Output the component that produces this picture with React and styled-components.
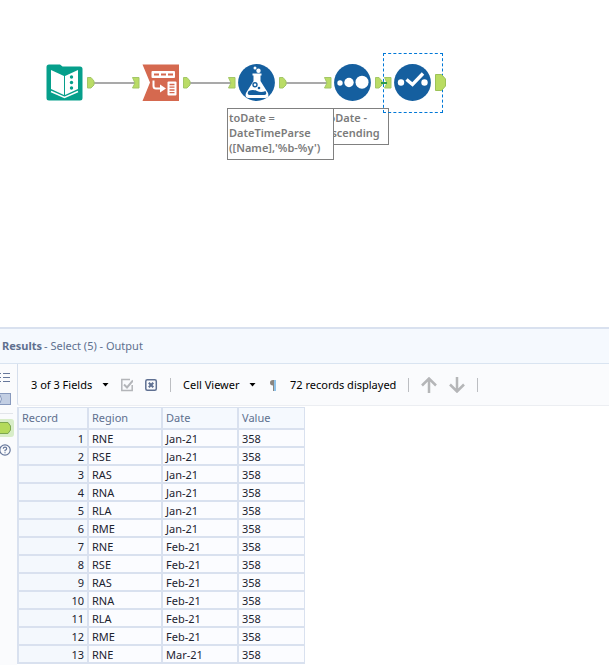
import styled, { createGlobalStyle } from "styled-components";

const REGIONS = ["RNE", "RSE", "RAS", "RNA", "RLA", "RME"];
const MONTHS = ["Jan-21", "Feb-21", "Mar-21"];

const records = Array.from({ length: 13 }, (_, i) => ({
    id: i + 1,
    region: REGIONS[i % 6],
    date: MONTHS[Math.floor(i / 6)],
    value: 358
}));

export default function App() {
    return (
        <>
            <GlobalStyle />
            <Page>
                <Workflow />
                <Results />
            </Page>
        </>
    );
}

function Workflow() {
    return (
        <Canvas aria-label="Workflow">
            <Wires width="460" height="120" aria-hidden="true">
                <path d="M93 83H136M189 83H231M285 83H327" stroke="#a9a9a9" strokeWidth="2" />
            </Wires>
            <Annotation $x={322} $w={67}>toDate -<br />Ascending</Annotation>
            <Annotation $x={227} $w={107}>toDate =<br />DateTimeParse<br />([Name],'%b-%y')</Annotation>
            <Selection />
            <Tool $x={46}><InputIcon /></Tool>
            <Tool $x={142}><TransposeIcon /></Tool>
            <Tool $x={238}><FormulaIcon /></Tool>
            <Tool $x={334}><SortIcon /></Tool>
            <Tool $x={394}><SelectIcon /></Tool>
            {[87, 183, 279, 375].map(x => <OutAnchor key={x} x={x} />)}
            {[132, 228, 324, 384].map(x => <InAnchor key={x} x={x} />)}
            <Wires width="460" height="120" aria-hidden="true">
                <path d="M381 83H387" stroke="#2f9a4b" strokeWidth="2" />
                <path d="M435.5 74.500H441.500L445.500 79V86L441.500 90.500H435.500Z" fill="#b9dc62" stroke="#9cc258" />
            </Wires>
        </Canvas>
    );
}

function OutAnchor({ x }) {
    return (
        <Anchor $x={x} width="8" height="12" aria-hidden="true">
            <path d="M.5 .5H4L7 4V8L4 11H.5Z" fill="#badc66" stroke="#a3c767" />
        </Anchor>
    );
}

function InAnchor({ x }) {
    return (
        <Anchor $x={x} width="8" height="12" aria-hidden="true">
            <path d="M.5 .5H7V11H.5L3 6Z" fill="#badc66" stroke="#a3c767" />
        </Anchor>
    );
}

function InputIcon() {
    return (
        <svg width="37" height="37" viewBox="0 0 37 37">
            <path d="M3 .5H14L16.500 2.500H34Q36.500 2.500 36.500 5V34Q36.500 36.500 34 36.500H3Q.5 36.500 .5 34V3Q.5 .5 3 .5Z" fill="#069f8b" />
            <path d="M5 6L18 12V31L5 25Z" fill="#fff" />
            <path d="M19 12L32 6V25L19 31Z" fill="#fff" />
            <path d="M5 27.500L18.500 33.500L32 27.500" fill="none" stroke="#fff" strokeWidth="1.500" />
            <g fill="#069f8b">
                <circle cx="25.500" cy="13" r="1.700" />
                <circle cx="25.500" cy="18.500" r="1.700" />
                <circle cx="25.500" cy="24" r="1.700" />
            </g>
        </svg>
    );
}

function TransposeIcon() {
    return (
        <svg width="37" height="37" viewBox="0 0 37 37">
            <path d="M.5 .5H37V37H.5L8 18.500Z" fill="#d5694f" />
            <rect x="9.500" y="7" width="23.500" height="7" rx="1" fill="#fff" />
            <path d="M12 10.500H17M19 10.500H24M26 10.500H31" stroke="#d5694f" strokeWidth="2" />
            <rect x="25.500" y="17.500" width="9" height="14" rx="1" fill="#fff" />
            <path d="M27.500 20.500H32.500M27.500 23.200H32.500M27.500 26H32.500M27.500 28.700H32.500" stroke="#d5694f" strokeWidth="1.300" />
            <path d="M11.500 16.500V22Q11.500 24.500 14 24.500H19" fill="none" stroke="#fff" strokeWidth="2" />
            <path d="M18 20.500L24 24.500L18 28.500Z" fill="#fff" />
        </svg>
    );
}

function FormulaIcon() {
    return (
        <svg width="37" height="37" viewBox="0 0 37 37">
            <circle cx="18.500" cy="18.500" r="18.400" fill="#155f9f" />
            <circle cx="17" cy="4" r="1.500" fill="#fff" />
            <circle cx="20.500" cy="6.800" r="2.200" fill="#fff" />
            <path d="M14.500 9.500H23.500V11.500H22.500V17L30 29Q31.500 33.500 27.500 34H10.500Q6.500 33.500 8 29L15.500 17V11.500H14.500Z" fill="#fff" />
            <path d="M10.500 27Q15 25 19 27T27.500 27Q29.500 31 26.500 31H11.500Q8.500 31 10.500 27Z" fill="#155f9f" />
            <circle cx="17" cy="20.800" r="2" fill="none" stroke="#155f9f" strokeWidth="1.400" />
            <circle cx="21" cy="24" r="1.300" fill="#155f9f" />
        </svg>
    );
}

function SortIcon() {
    return (
        <svg width="37" height="37" viewBox="0 0 37 37">
            <circle cx="18.500" cy="18.500" r="18.400" fill="#155f9f" />
            <g fill="#fff">
                <circle cx="6" cy="19" r="2.700" />
                <circle cx="15" cy="18.500" r="4.700" />
                <circle cx="28" cy="18.200" r="6.500" />
            </g>
        </svg>
    );
}

function SelectIcon() {
    return (
        <svg width="37" height="37" viewBox="0 0 37 37">
            <circle cx="18.500" cy="18.500" r="18.400" fill="#155f9f" />
            <circle cx="7" cy="18.500" r="3.200" fill="#fff" />
            <circle cx="30.500" cy="18.500" r="3.200" fill="#fff" />
            <path d="M12.500 15.500L18.500 20.500L29 9.500" fill="none" stroke="#fff" strokeWidth="3.400" />
        </svg>
    );
}

function Results() {
    return (
        <Panel>
            <PanelHeader>
                <strong>Results</strong>
                <span>- Select (5) - Output</span>
            </PanelHeader>
            <PanelBody>
                <Rail>
                    <RailButton aria-label="Messages">
                        <svg width="14" height="18">
                            <path d="M3 5.500H10M3 9.500H10M3 13.500H10M0 5.500H1M0 9.500H1M0 13.500H1" stroke="#66779b" />
                        </svg>
                    </RailButton>
                    <RailButton aria-label="Input data">
                        <svg width="14" height="18">
                            <rect x="-2" y="3.500" width="12.500" height="11" fill="#c2cee3" stroke="#8799bd" />
                            <path d="M0 5Q3 9 0 13" fill="#e3e9f4" stroke="#8799bd" />
                        </svg>
                    </RailButton>
                    <RailLine />
                    <RailButton aria-label="Output data" $active>
                        <svg width="14" height="18">
                            <path d="M-2 3.500H8L10.500 7V11L8 14.500H-2Z" fill="#b4da5b" stroke="#7da750" />
                        </svg>
                    </RailButton>
                    <RailButton aria-label="Help">
                        <svg width="14" height="18" fill="none" stroke="#66779b">
                            <circle cx="5" cy="9" r="5.200" strokeWidth="1.200" />
                            <path d="M3.300 7.700Q3.300 6.200 5 6.200T6.700 7.700Q6.700 8.600 5 9.400V10.200M5 11.200V12.200" strokeWidth="1.200" />
                        </svg>
                    </RailButton>
                </Rail>
                <Content>
                    <Toolbar />
                    <ResultsTable />
                </Content>
            </PanelBody>
        </Panel>
    );
}

function Dropdown({ label, value }) {
    return (
        <DropdownLabel>
            <DropdownSelect aria-label={label} defaultValue={value}>
                <option>{value}</option>
            </DropdownSelect>
            <svg width="7" height="4" aria-hidden="true"><path d="M.5 0H6.500L3.500 3.500Z" fill="#000" /></svg>
        </DropdownLabel>
    );
}

function Toolbar() {
    return (
        <Bar>
            <Dropdown label="Fields" value="3 of 3 Fields" />
            <IconButton aria-label="Select all">
                <svg width="12" height="14" fill="none" stroke="#b3b5b9">
                    <path d="M9 1.500H.8V12.500H11.200V7" strokeWidth="1.500" />
                    <path d="M3 6.500L6 9.500L12 2.500" strokeWidth="2" />
                </svg>
            </IconButton>
            <IconButton aria-label="Deselect all">
                <svg width="13" height="14" fill="none" stroke="#5f7092">
                    <rect x=".8" y="1.800" width="10.500" height="10.500" rx="1.500" strokeWidth="1.500" />
                    <path d="M3.800 4.800L8.300 9.300M8.300 4.800L3.800 9.300" strokeWidth="2" />
                </svg>
            </IconButton>
            <Divider />
            <Dropdown label="Viewer" value="Cell Viewer" />
            <IconButton aria-label="Show whitespace">
                <svg width="10" height="12">
                    <path d="M6 1H5Q2 1 2 3.800T5 6.500H6Z" fill="#8a8580" />
                    <path d="M5.500 1V12" stroke="#8a8580" />
                    <path d="M7 1V12" stroke="#8fc3ea" strokeWidth="2" />
                </svg>
            </IconButton>
            <output>72 records displayed</output>
            <Divider />
            <IconButton aria-label="Previous">
                <svg width="16" height="16" fill="none" stroke="#b5b6b8" strokeWidth="2.500">
                    <path d="M8 16V2M1 8.500L8 1.500L15 8.500" />
                </svg>
            </IconButton>
            <IconButton aria-label="Next">
                <svg width="16" height="16" fill="none" stroke="#b5b6b8" strokeWidth="2.500">
                    <path d="M8 0V14M1 7.500L8 14.500L15 7.500" />
                </svg>
            </IconButton>
            <Divider />
        </Bar>
    );
}

function ResultsTable() {
    return (
        <Table>
            <colgroup>
                <Col $w={70} />
                <Col $w={74} />
                <Col $w={76} />
                <Col $w={68} />
            </colgroup>
            <thead>
                <tr>
                    <HeadCell>Record</HeadCell>
                    <HeadCell>Region</HeadCell>
                    <HeadCell>Date</HeadCell>
                    <HeadCell>Value</HeadCell>
                </tr>
            </thead>
            <tbody>
                {records.map(({ id, region, date, value }) => (
                    <tr key={id}>
                        <RecordCell>{id}</RecordCell>
                        <Cell>{region}</Cell>
                        <Cell>{date}</Cell>
                        <Cell>{value}</Cell>
                    </tr>
                ))}
            </tbody>
        </Table>
    );
}

const GlobalStyle = createGlobalStyle`
    * {
        box-sizing: border-box;
    }
    body {
        margin: 0;
        background: #fff;
        font-family: "Noto Sans", "Open Sans", sans-serif;
        font-size: 11px;
        line-height: 16px;
        color: #000;
    }
    button, select {
        font: inherit;
        color: inherit;
        border: none;
        background: none;
        padding: 0;
        margin: 0;
    }
    svg {
        display: block;
    }
`

const Page = styled.main`
    height: 100vh;
    display: flex;
    flex-direction: column;
    overflow: hidden;
`

const Canvas = styled.section`
    position: relative;
    flex: 0 0 auto;
    min-height: 327px;
    overflow: hidden;
`

const Wires = styled.svg`
    position: absolute;
    left: 0;
    top: 0;
`

const Tool = styled.div`
    position: absolute;
    left: ${props => props.$x}px;
    top: 64px;
`

const Anchor = styled.svg`
    position: absolute;
    left: ${props => props.$x}px;
    top: 77px;
`

const Annotation = styled.div`
    position: absolute;
    left: ${props => props.$x}px;
    top: 108px;
    width: ${props => props.$w}px;
    padding: 1px 1px 4px;
    border: 1px solid #808080;
    background: #fff;
    color: #7b7b7b;
    font-weight: 600;
    line-height: 15px;
    white-space: nowrap;
`

const Selection = styled.div`
    position: absolute;
    left: 383px;
    top: 53px;
    width: 60px;
    height: 60px;
    border: 1px dashed #0078d7;
`

const Panel = styled.section`
    flex: 1;
    display: flex;
    flex-direction: column;
    border-top: 2px solid #d9e1ef;
`

const PanelHeader = styled.header`
    display: flex;
    align-items: center;
    gap: 2px;
    height: 35px;
    padding: 0 2px;
    border-bottom: 1px solid #d9e4f1;
    background: #f5f9fe;
    color: #60708f;
`

const PanelBody = styled.div`
    flex: 1;
    display: flex;
`

const Rail = styled.nav`
    width: 17px;
    padding-top: 4px;
    display: flex;
    flex-direction: column;
    gap: 4px;
    background: #fafbfd;
`

const RailButton = styled.button`
    width: 14px;
    height: 18px;
    border-radius: 0 3px 3px 0;
    background: ${props => props.$active ? "#d8edc8" : "none"};
`

const RailLine = styled.hr`
    width: 13px;
    margin: 1px 0;
    border: none;
    border-top: 1px solid #e2e5ea;
`

const Content = styled.div`
    flex: 1;
    min-width: 0;
`

const Bar = styled.div`
    display: flex;
    align-items: center;
    gap: 12px;
    height: 42px;
    margin-bottom: 1px;
    padding-left: 13px;
    border-left: 1px solid #d5deec;
    border-bottom: 1px solid #eceef2;
    border-bottom-left-radius: 3px;
    background: #fafbfd;
    white-space: nowrap;
`

const DropdownLabel = styled.label`
    display: flex;
    align-items: center;
    gap: 9px;
    & svg {
        pointer-events: none;
    }
`

const DropdownSelect = styled.select`
    appearance: none;
    cursor: pointer;
`

const IconButton = styled.button`
    cursor: pointer;
`

const Divider = styled.span`
    width: 1px;
    height: 14px;
    background: #bcbec2;
`

const Table = styled.table`
    width: 288px;
    table-layout: fixed;
    border-collapse: separate;
    border-spacing: 0;
`

const Col = styled.col`
    width: ${props => props.$w}px;
`

const Cell = styled.td`
    height: 18px;
    padding: 2px 3px 0;
    border-left: 2px solid #d9e1ef;
    border-bottom: 2px solid #d9e1ef;
    background: #fbfcff;
    color: #1c2330;
    line-height: 14px;
    &:last-child {
        border-right: 1px solid #d9e1ef;
    }
`

const RecordCell = styled(Cell)`
    background: #f4f8fd;
    text-align: right;
`

const HeadCell = styled(Cell).attrs({ as: "th", scope: "col" })`
    height: 23px;
    padding: 0 3px;
    border-top: 1px solid #d9e1ef;
    background: #f5f9fe;
    color: #60708f;
    font-weight: 400;
    text-align: left;
`
